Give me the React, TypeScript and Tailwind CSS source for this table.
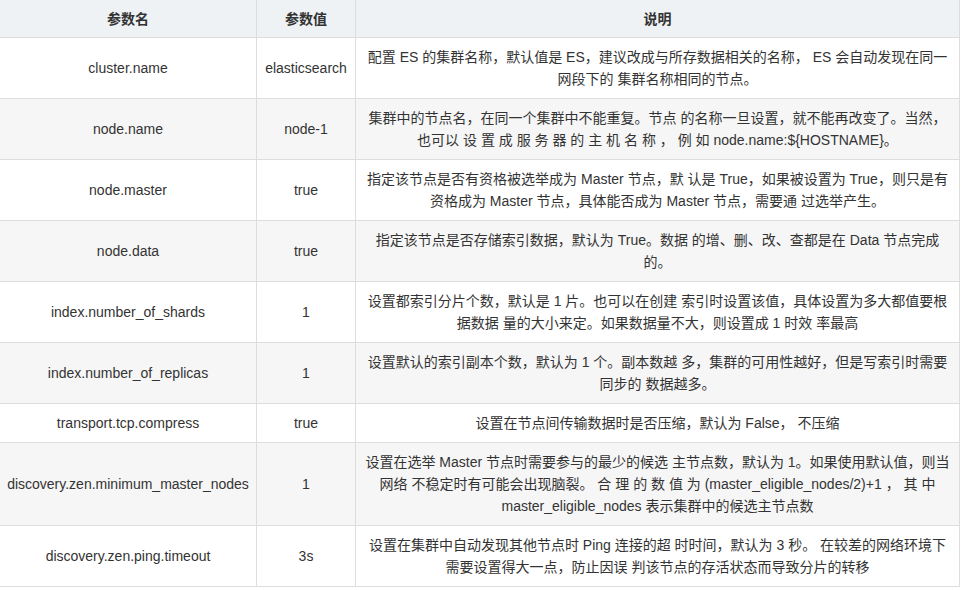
import React from 'react';

const rows = [
    {
        name: 'cluster.name',
        value: 'elasticsearch',
        desc: [
            '配置 ES 的集群名称，默认值是 ES，建议改成与所存数据相关的名称， ES 会自动发现在同一',
            '网段下的 集群名称相同的节点。',
        ],
    },
    {
        name: 'node.name',
        value: 'node-1',
        desc: [
            '集群中的节点名，在同一个集群中不能重复。节点 的名称一旦设置，就不能再改变了。当然，',
            '也可以 设 置 成 服 务 器 的 主 机 名 称 ， 例 如 node.name:${HOSTNAME}。',
        ],
    },
    {
        name: 'node.master',
        value: 'true',
        desc: [
            '指定该节点是否有资格被选举成为 Master 节点，默 认是 True，如果被设置为 True，则只是有',
            '资格成为 Master 节点，具体能否成为 Master 节点，需要通 过选举产生。',
        ],
    },
    {
        name: 'node.data',
        value: 'true',
        desc: [
            '指定该节点是否存储索引数据，默认为 True。数据 的增、删、改、查都是在 Data 节点完成',
            '的。',
        ],
    },
    {
        name: 'index.number_of_shards',
        value: '1',
        desc: [
            '设置都索引分片个数，默认是 1 片。也可以在创建 索引时设置该值，具体设置为多大都值要根',
            '据数据 量的大小来定。如果数据量不大，则设置成 1 时效 率最高',
        ],
    },
    {
        name: 'index.number_of_replicas',
        value: '1',
        desc: [
            '设置默认的索引副本个数，默认为 1 个。副本数越 多，集群的可用性越好，但是写索引时需要',
            '同步的 数据越多。',
        ],
    },
    {
        name: 'transport.tcp.compress',
        value: 'true',
        desc: ['设置在节点间传输数据时是否压缩，默认为 False， 不压缩'],
    },
    {
        name: 'discovery.zen.minimum_master_nodes',
        value: '1',
        desc: [
            '设置在选举 Master 节点时需要参与的最少的候选 主节点数，默认为 1。如果使用默认值，则当',
            '网络 不稳定时有可能会出现脑裂。 合 理 的 数 值 为 (master_eligible_nodes/2)+1 ， 其 中',
            'master_eligible_nodes 表示集群中的候选主节点数',
        ],
    },
    {
        name: 'discovery.zen.ping.timeout',
        value: '3s',
        desc: [
            '设置在集群中自动发现其他节点时 Ping 连接的超 时时间，默认为 3 秒。 在较差的网络环境下',
            '需要设置得大一点，防止因误 判该节点的存活状态而导致分片的转移',
        ],
    },
];

const cell = 'flex items-center justify-center text-center border-r border-b border-[#dddddd] px-2 py-2';

export default function App() {
    return (
        <div
            className="w-[962px] h-[590px] bg-white text-[14px] text-[#333333] leading-[22px]"
            style={{ fontFamily: '"Liberation Sans", Arial, "Noto Sans CJK SC", sans-serif' }}
        >
            <div className="grid grid-cols-[257px_99px_604px]">
                {/* 表头 */}
                <div className={`${cell} h-[38px] bg-[#eff2f5] font-bold`}>参数名</div>
                <div className={`${cell} h-[38px] bg-[#eff2f5] font-bold`}>参数值</div>
                <div className={`${cell} h-[38px] bg-[#eff2f5] font-bold`}>说明</div>

                {rows.map((row, index) => {
                    const bg = index % 2 === 1 ? 'bg-[#f6f6f6]' : 'bg-white';
                    return (
                        <React.Fragment key={row.name}>
                            <div className={`${cell} ${bg}`}>{row.name}</div>
                            <div className={`${cell} ${bg}`}>{row.value}</div>
                            <div className={`${cell} ${bg} flex-col`}>
                                {row.desc.map((line) => (
                                    <span key={line} className="block whitespace-nowrap">
                                        {line}
                                    </span>
                                ))}
                            </div>
                        </React.Fragment>
                    );
                })}
            </div>
        </div>
    );
}
